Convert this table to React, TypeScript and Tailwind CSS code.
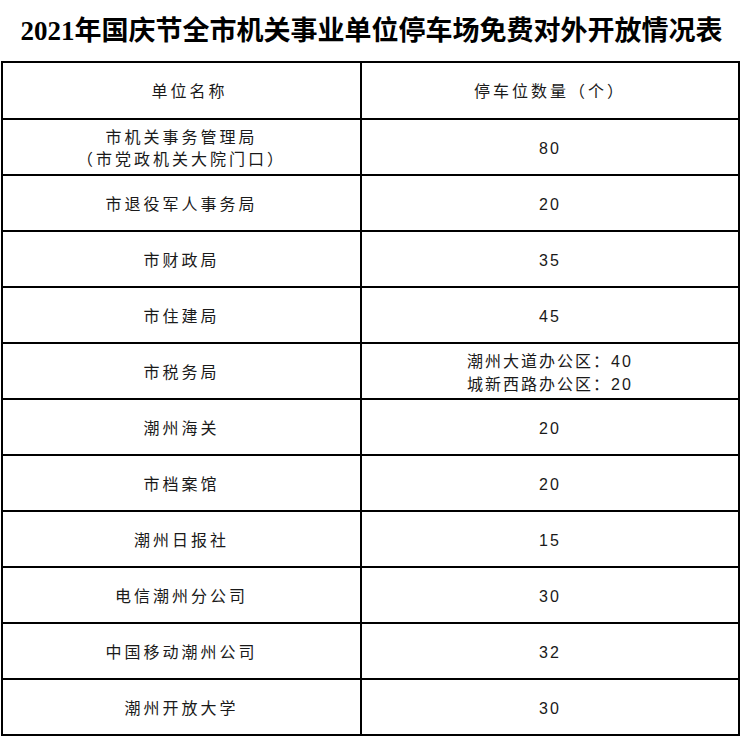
const rows: { name: string[]; count: string[] }[] = [
  { name: ['市机关事务管理局', '（市党政机关大院门口）'], count: ['80'] },
  { name: ['市退役军人事务局'], count: ['20'] },
  { name: ['市财政局'], count: ['35'] },
  { name: ['市住建局'], count: ['45'] },
  { name: ['市税务局'], count: ['潮州大道办公区：40', '城新西路办公区：20'] },
  { name: ['潮州海关'], count: ['20'] },
  { name: ['市档案馆'], count: ['20'] },
  { name: ['潮州日报社'], count: ['15'] },
  { name: ['电信潮州分公司'], count: ['30'] },
  { name: ['中国移动潮州公司'], count: ['32'] },
  { name: ['潮州开放大学'], count: ['30'] },
];

export default function App() {
  return (
    <div className="w-[743px] h-[737px] bg-white text-[#1a1a1a] font-['Liberation_Sans','Noto_Sans_CJK_SC',sans-serif]">
      <div className="h-[61px] flex items-center justify-center pt-[1px]">
        <h1 className="text-[27px] leading-none font-bold text-black font-['Liberation_Serif','Noto_Sans_CJK_SC',serif]">
          2021年国庆节全市机关事业单位停车场免费对外开放情况表
        </h1>
      </div>
      <table className="ml-[1px] w-[739px] border-collapse border-2 border-black table-fixed">
        <colgroup>
          <col className="w-[359px]" />
          <col />
        </colgroup>
        <thead>
          <tr className="h-[57px]">
            <th className="border-2 border-black font-normal text-[16px] tracking-[3px] pl-[16px] pt-[3px]">单位名称</th>
            <th className="border-2 border-black font-normal text-[16px] tracking-[3px] pt-[3px]">停车位数量（个）</th>
          </tr>
        </thead>
        <tbody>
          {rows.map((r, i) => (
            <tr key={i} className="h-[56px]">
              <td className="border-2 border-black text-center text-[16px] tracking-[3px] leading-[22px] pt-[3px]">
                {r.name.map(l => (
                  <div key={l}>{l}</div>
                ))}
              </td>
              <td className="border-2 border-black text-center text-[16px] tracking-[2px] leading-[23px] pt-[3px]">
                {r.count.map(l => (
                  <div key={l}>{l}</div>
                ))}
              </td>
            </tr>
          ))}
        </tbody>
      </table>
    </div>
  );
}
